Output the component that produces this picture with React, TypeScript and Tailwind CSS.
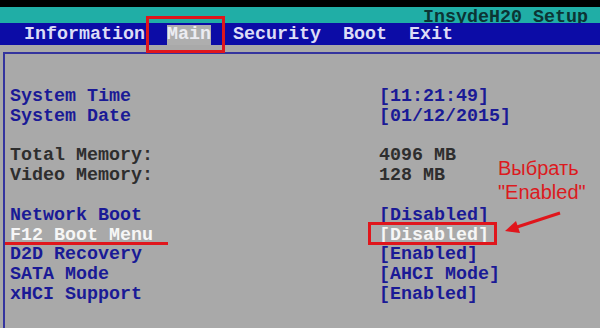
import React from 'react';

type Row = { label: string; value: string; tone: 'blue' | 'gray' | 'sel' } | null;

const rows: Row[] = [
  { label: 'System Time', value: '[11:21:49]', tone: 'blue' },
  { label: 'System Date', value: '[01/12/2015]', tone: 'blue' },
  null,
  { label: 'Total Memory:', value: '4096 MB', tone: 'gray' },
  { label: 'Video Memory:', value: '128 MB', tone: 'gray' },
  null,
  { label: 'Network Boot', value: '[Disabled]', tone: 'blue' },
  { label: 'F12 Boot Menu', value: '[Disabled]', tone: 'sel' },
  { label: 'D2D Recovery', value: '[Enabled]', tone: 'blue' },
  { label: 'SATA Mode', value: '[AHCI Mode]', tone: 'blue' },
  { label: 'xHCI Support', value: '[Enabled]', tone: 'blue' },
];

const toneClass = {
  blue: 'text-[#1a1a96]',
  gray: 'text-[#2e2e2e]',
  sel: 'text-[#f6f6f6]',
};

export default function App() {
  return (
    <div
      className="relative w-[600px] h-[328px] overflow-hidden bg-[#a9a9a9] flex flex-col font-bold text-[18.33px]"
      style={{ fontFamily: '"Liberation Mono", "DejaVu Sans Mono", monospace' }}
    >
      {/* Title strip */}
      <div className="h-[7px] bg-black shrink-0" />
      <div className="h-[16px] bg-[#20aea6] shrink-0 flex items-start justify-end pr-[12px] pt-[3px]">
        <span className="leading-[16px] text-[#0c3434]">InsydeH20 Setup</span>
      </div>

      {/* Menu bar */}
      <div className="h-[22px] bg-[#0c0ca6] shrink-0 flex items-end pl-[24px] whitespace-pre text-[#dcdcf6]">
        <span className="leading-[20px]">Information  </span>
        <span className="leading-[20px] bg-[#aeaeae] text-[#ececf2]">Main</span>
        <span className="leading-[20px]">  Security  Boot  Exit</span>
      </div>

      <div className="h-[7px] shrink-0" />

      {/* Frame */}
      <div className="flex-1 ml-[3px] border-t-2 border-l-2 border-[#34349e] pt-[33px] pl-[5px]">
        {rows.map((row, i) =>
          row ? (
            <div key={i} className={`flex h-[19.8px] leading-[20px] whitespace-pre ${toneClass[row.tone]}`}>
              <span className="w-[369px] shrink-0">{row.label}</span>
              <span>{row.value}</span>
            </div>
          ) : (
            <div key={i} className="h-[19.8px]" />
          )
        )}
      </div>

      {/* Annotations */}
      <div className="absolute left-[146px] top-[16px] w-[79px] h-[37px] border-[3px] border-[#e0161c]" />
      <div className="absolute left-[5px] top-[242px] w-[163px] h-[3px] bg-[#e0161c]" />
      <div className="absolute left-[368px] top-[222px] w-[129px] h-[23px] border-[3px] border-[#e0161c]" />
      <svg className="absolute left-0 top-0" width="600" height="328" viewBox="0 0 600 328">
        <line x1="560" y1="213" x2="517" y2="227" stroke="#e0161c" strokeWidth="3" />
        <polygon points="505,231 520,233 516,221" fill="#e0161c" />
      </svg>
      <div
        className="absolute left-[498px] top-[156px] font-normal text-[20px] leading-[24px] text-[#dc1a1e]"
        style={{ fontFamily: '"Liberation Sans", Arial, sans-serif' }}
      >
        <div>Выбрать</div>
        <div>"Enabled"</div>
      </div>
    </div>
  );
}
